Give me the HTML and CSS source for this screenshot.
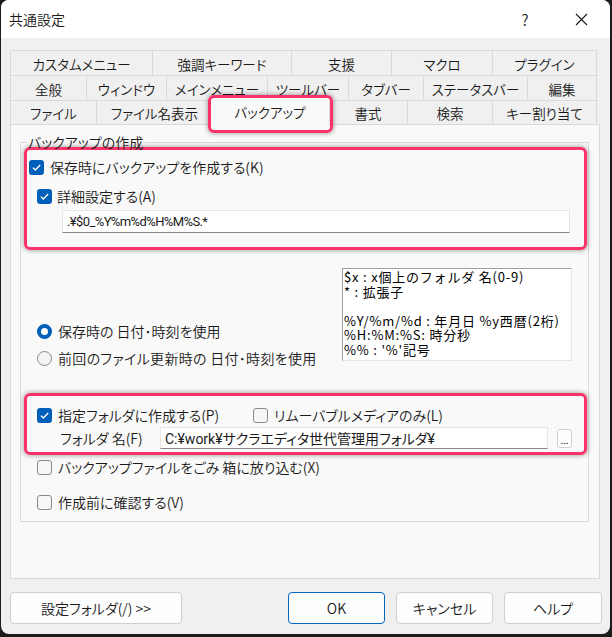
FILE: index.html
```html
<!DOCTYPE html>
<html>
<head>
    <title>共通設定</title>
    <link rel="stylesheet" href="styles.css">
</head>
<body>
    <div class="window">
        <div class="titlebar">
            <span class="title">共通設定</span>
            <span class="tb-btn help">?</span>
            <span class="tb-btn close">
                <svg width="13" height="13" viewBox="0 0 13 13"><path d="M1 1 L12 12 M12 1 L1 12" stroke="#1a1a1a" stroke-width="1.1" fill="none"/></svg>
            </span>
        </div>

        <div class="content">
            <div class="tabs">
                <div class="tab-row row1">
                    <div class="tab">カスタムメニュー</div>
                    <div class="tab">強調キーワード</div>
                    <div class="tab">支援</div>
                    <div class="tab">マクロ</div>
                    <div class="tab">プラグイン</div>
                </div>
                <div class="tab-row row2">
                    <div class="tab">全般</div>
                    <div class="tab">ウィンドウ</div>
                    <div class="tab">メインメニュー</div>
                    <div class="tab">ツールバー</div>
                    <div class="tab">タブバー</div>
                    <div class="tab">ステータスバー</div>
                    <div class="tab">編集</div>
                </div>
                <div class="tab-row row3">
                    <div class="tab">ファイル</div>
                    <div class="tab">ファイル名表示</div>
                    <div class="tab selected">バックアップ</div>
                    <div class="tab">書式</div>
                    <div class="tab">検索</div>
                    <div class="tab">キー割り当て</div>
                </div>
            </div>

            <div class="panel">
                <fieldset class="group">
                    <legend>バックアップの作成</legend>

                    <div class="mark mark-top">
                        <label class="check row-a">
                            <span class="cb on"><svg width="15" height="15" viewBox="0 0 15 15"><path d="M3.8 7.6 L6.3 10 L11.2 5" stroke="#fff" stroke-width="1.3" fill="none"/></svg></span>
                            保存時にバックアップを作成する(K)
                        </label>
                        <label class="check row-b">
                            <span class="cb on"><svg width="15" height="15" viewBox="0 0 15 15"><path d="M3.8 7.6 L6.3 10 L11.2 5" stroke="#fff" stroke-width="1.3" fill="none"/></svg></span>
                            詳細設定する(A)
                        </label>
                        <div class="field field-pattern">.¥$0_%Y%m%d%H%M%S.*</div>
                    </div>

                    <div class="stamp-row">
                        <div class="radios">
                            <label class="check">
                                <span class="rb on"></span>
                                保存時の 日付･時刻を使用
                            </label>
                            <label class="check">
                                <span class="rb"></span>
                                前回のファイル更新時の 日付･時刻を使用
                            </label>
                        </div>
                        <div class="info">$x : x個上のフォルダ 名(0-9)
* : 拡張子

%Y/%m/%d : 年月日 %y西暦(2桁)
%H:%M:%S: 時分秒
%% : '%'記号</div>
                    </div>

                    <div class="mark mark-folder">
                        <div class="opt-row">
                            <label class="check">
                                <span class="cb on"><svg width="15" height="15" viewBox="0 0 15 15"><path d="M3.8 7.6 L6.3 10 L11.2 5" stroke="#fff" stroke-width="1.3" fill="none"/></svg></span>
                                指定フォルダに作成する(P)
                            </label>
                            <label class="check">
                                <span class="cb"></span>
                                リムーバブルメディアのみ(L)
                            </label>
                        </div>
                        <div class="folder-row">
                            <span class="folder-label">フォルダ 名(F)</span>
                            <div class="field field-folder">C:¥work¥サクラエディタ世代管理用フォルダ¥</div>
                            <span class="browse">...</span>
                        </div>
                    </div>

                    <label class="check plain trash">
                        <span class="cb"></span>
                        バックアップファイルをごみ 箱に放り込む(X)
                    </label>
                    <label class="check plain confirm">
                        <span class="cb"></span>
                        作成前に確認する(V)
                    </label>
                </fieldset>
            </div>

            <div class="footer">
                <button class="btn btn-folder">設定フォルダ(/) &gt;&gt;</button>
                <div class="btn-group">
                    <button class="btn btn-ok">OK</button>
                    <button class="btn">キャンセル</button>
                    <button class="btn btn-help">ヘルプ</button>
                </div>
            </div>
        </div>
    </div>
</body>
</html>
```

FILE: styles.css
```css
body {
    margin: 0;
    background-color: #1c1c1c;
    font-family: "Noto Sans CJK JP DemiLight", "Noto Sans CJK JP", "Noto Sans", sans-serif;
    font-size: 14px;
    font-feature-settings: "palt";
    color: #1a1a1a;
}

.window {
    width: 609px;
    height: 634px;
    margin-left: 1px;
    background-color: #f0f0f0;
    border-radius: 8px;
    overflow: hidden;
}

.titlebar {
    height: 38px;
    background-color: #ffffff;
    display: flex;
    align-items: center;
    padding-left: 8px;
}

.title {
    flex: 1;
    font-size: 14px;
}

.tb-btn {
    width: 46px;
    height: 38px;
    display: flex;
    align-items: center;
    justify-content: center;
}

.help {
    font-size: 15px;
    margin-right: 10px;
}

.close {
    margin-right: 6px;
}

.content {
    padding: 12px 0 0 9px;
}

/* tabs */
.tabs {
    width: 587px;
}

.tab-row {
    display: grid;
    height: 25px;
}

.row1 {
    grid-template-columns: 142px 139px 100px 101px 105px;
}

.row2 {
    grid-template-columns: 76px 80px 101px 81px 75px 104px 70px;
}

.row3 {
    grid-template-columns: 86px 116px 116px 79px 85px 105px;
    height: 24px;
}

.tab {
    border-top: 1px solid #dadada;
    border-left: 1px solid #dadada;
    display: flex;
    align-items: center;
    justify-content: center;
    font-size: 13.5px;
    padding-top: 1px;
}

.tab:last-child {
    border-right: 1px solid #dadada;
}

.tab.selected {
    position: relative;
    z-index: 2;
    margin: -3px -2px -2px -2px;
    background-color: #f9f9f9;
    border-right: 1px solid #dadada;
    padding-top: 0;
}

.tab.selected::after {
    content: "";
    position: absolute;
    left: -3px;
    top: -3px;
    right: -4px;
    bottom: -7px;
    border: 3px solid #f8336a;
    border-radius: 6px;
    box-shadow: 0 0 4px 1px rgba(0, 0, 0, 0.3);
}

.panel {
    width: 590px;
    height: 455px;
    box-sizing: border-box;
    background-color: #f9f9f9;
    border: 1px solid #dadada;
    padding: 8px 0 0 9px;
}

.group {
    width: 569px;
    height: 389px;
    box-sizing: border-box;
    margin: 0;
    padding: 0;
    border: 1px solid #dadada;
}

.group legend {
    margin-left: 6px;
    padding: 0 2px 0 1px;
    line-height: 18px;
}

/* pink highlight boxes */
.mark {
    width: 563px;
    box-sizing: border-box;
    border: 3px solid #f8336a;
    border-radius: 6px;
    box-shadow: 0 0 4px 1px rgba(0, 0, 0, 0.3);
    margin-left: 3px;
}

.mark-top {
    margin-top: -4px;
    padding: 7px 0 14px 2px;
}

.check {
    display: flex;
    align-items: center;
    gap: 6px;
    height: 20px;
    white-space: nowrap;
}

.row-b {
    margin-top: 9px;
    margin-left: 8px;
    gap: 5px;
}

.cb {
    width: 15px;
    height: 15px;
    box-sizing: border-box;
    border-radius: 3px;
    border: 1px solid #8a8a8a;
    background-color: #f6f6f6;
    display: flex;
}

.cb.on {
    border: none;
    background-color: #005fb8;
}

.rb {
    width: 15px;
    height: 15px;
    box-sizing: border-box;
    border-radius: 50%;
    border: 1px solid #8a8a8a;
    background-color: #f4f4f4;
}

.rb.on {
    border: 4px solid #005fb8;
    background-color: #ffffff;
}

.field {
    height: 23px;
    box-sizing: border-box;
    background-color: #ffffff;
    border: 1px solid #e6e6e6;
    border-bottom-color: #8a8a8a;
    display: flex;
    align-items: center;
    padding-left: 4px;
    white-space: nowrap;
    font-family: Roboto, "Noto Sans CJK JP", sans-serif;
}

.field-pattern {
    width: 508px;
    margin: 4px 0 0 33px;
    font-size: 13px;
    letter-spacing: -0.6px;
}

.stamp-row {
    display: flex;
    justify-content: space-between;
    align-items: flex-start;
    margin-top: 18px;
    padding: 0 16px;
}

.radios {
    display: flex;
    flex-direction: column;
    gap: 7px;
    padding-top: 53px;
}

.radios .check:last-child {
    letter-spacing: 0.3px;
}

.info {
    width: 230px;
    height: 93px;
    box-sizing: border-box;
    background-color: #ffffff;
    border: 1px solid #e6e6e6;
    border-top-color: #a0a0a0;
    border-left-color: #a0a0a0;
    padding: 1px 0 0 1px;
    font-family: "Noto Sans CJK JP", sans-serif;
    font-size: 13px;
    letter-spacing: 0.8px;
    font-feature-settings: normal;
    line-height: 14.5px;
    white-space: pre;
    color: #000000;
}

.mark-folder {
    margin-top: 25px;
    padding: 9px 0 3px 10px;
}

.opt-row {
    display: flex;
}

.opt-row .check:first-child {
    width: 216px;
}

.folder-row {
    display: flex;
    align-items: center;
    margin-top: 2px;
    height: 22px;
}

.folder-label {
    width: 100px;
    margin-left: 23px;
}

.field-folder {
    width: 388px;
    height: 22px;
}

.browse {
    width: 15px;
    height: 19px;
    box-sizing: border-box;
    margin-left: 9px;
    border: 1px solid #d0d0d0;
    border-radius: 3px;
    background-color: #fdfdfd;
    font-size: 10px;
    display: flex;
    justify-content: center;
    align-items: flex-end;
    line-height: 14px;
}

.plain {
    margin-left: 16px;
}

.trash {
    margin-top: 2px;
}

.confirm {
    margin-top: 15px;
}

/* buttons */
.footer {
    width: 592px;
    display: flex;
    justify-content: space-between;
    margin-top: 13px;
}

.btn-group {
    display: flex;
    gap: 11px;
}

.btn {
    width: 97px;
    height: 32px;
    box-sizing: border-box;
    background-color: #fdfdfd;
    border: 1px solid #d0d0d0;
    border-radius: 4px;
    font-family: "Noto Sans CJK JP DemiLight", "Noto Sans CJK JP", "Noto Sans", sans-serif;
    font-size: 14px;
    font-feature-settings: "palt";
    color: #1a1a1a;
    padding: 0;
}

.btn-folder {
    width: 172px;
}

.btn-ok {
    border-color: #0067c0;
}

.btn-help {
    width: 98px;
}
```
